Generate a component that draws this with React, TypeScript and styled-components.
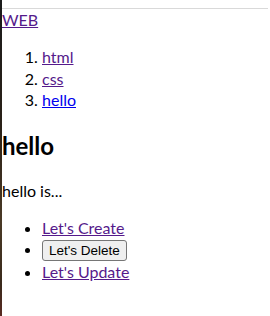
import styled, { createGlobalStyle } from "styled-components";

const GlobalStyle = createGlobalStyle`
    html, body {
        margin: 0;
        padding: 0;
        background: #ffffff;
    }
    body {
        font-family: "Lato", "Liberation Sans", sans-serif;
        font-size: 16px;
        line-height: 1.333;
        color: #000000;
    }
`;

const Frame = styled.div`
    display: flex;
    width: 270px;
    height: 316px;
    overflow: hidden;
`;

// dark strip of the desktop showing behind the window
const DesktopEdge = styled.div`
    width: 2px;
    flex-shrink: 0;
    background: linear-gradient(
        to bottom,
        #1b1b1b 0%,
        #2a2118 40%,
        #4a3a26 70%,
        #3a2a1c 90%,
        #5a2a22 100%
    );
`;

const Window = styled.div`
    flex: 1;
    display: flex;
    flex-direction: column;
    min-width: 0;
`;

const ChromeRule = styled.div`
    height: 8px;
    margin-right: 2px;
    border-bottom: 1px solid #d9d9d9;
    flex-shrink: 0;
`;

const Content = styled.main`
    display: flex;
    flex-direction: column;
`;

const TextLink = styled.a<{ $visited?: boolean }>`
    color: ${({ $visited }) => ($visited ? "#551a8b" : "#0000ee")};
    text-decoration: underline;
`;

const Title = styled.div`
    margin: 0;
`;

const NavList = styled.ol`
    margin: 16px 0;
    padding-left: 40px;
`;

const Heading = styled.h2`
    font-size: 24px;
    font-weight: 700;
    margin: 4px 0 18px;
`;

const Text = styled.p`
    margin: 0 0 15px;
`;

const ActionList = styled.ul`
    margin: 0;
    padding-left: 40px;
    list-style: disc;
`;

const ActionButton = styled.button`
    font-family: "Liberation Sans", Arial, sans-serif;
    font-size: 13.5px;
    line-height: 17px;
    padding: 1px 6px;
    margin: 0;
    background: #efefef;
    border: 1px solid #767676;
    border-radius: 3px;
    color: #000000;
`;

const topics = [
    { id: 1, title: "html", visited: true },
    { id: 2, title: "css", visited: true },
    { id: 3, title: "hello", visited: false }
];

export default function App() {
    return (
        <>
            <GlobalStyle />
            <Frame>
                <DesktopEdge />
                <Window>
                    <ChromeRule />
                    <Content>
                        <Title>
                            <TextLink href="#" $visited>
                                WEB
                            </TextLink>
                        </Title>
                        <NavList>
                            {topics.map((t) => (
                                <li key={t.id}>
                                    <TextLink href="#" $visited={t.visited}>
                                        {t.title}
                                    </TextLink>
                                </li>
                            ))}
                        </NavList>
                        <Heading>hello</Heading>
                        <Text>hello is...</Text>
                        <ActionList>
                            <li>
                                <TextLink href="#" $visited>
                                    Let's Create
                                </TextLink>
                            </li>
                            <li>
                                <ActionButton type="button">Let's Delete</ActionButton>
                            </li>
                            <li>
                                <TextLink href="#" $visited>
                                    Let's Update
                                </TextLink>
                            </li>
                        </ActionList>
                    </Content>
                </Window>
            </Frame>
        </>
    );
}
